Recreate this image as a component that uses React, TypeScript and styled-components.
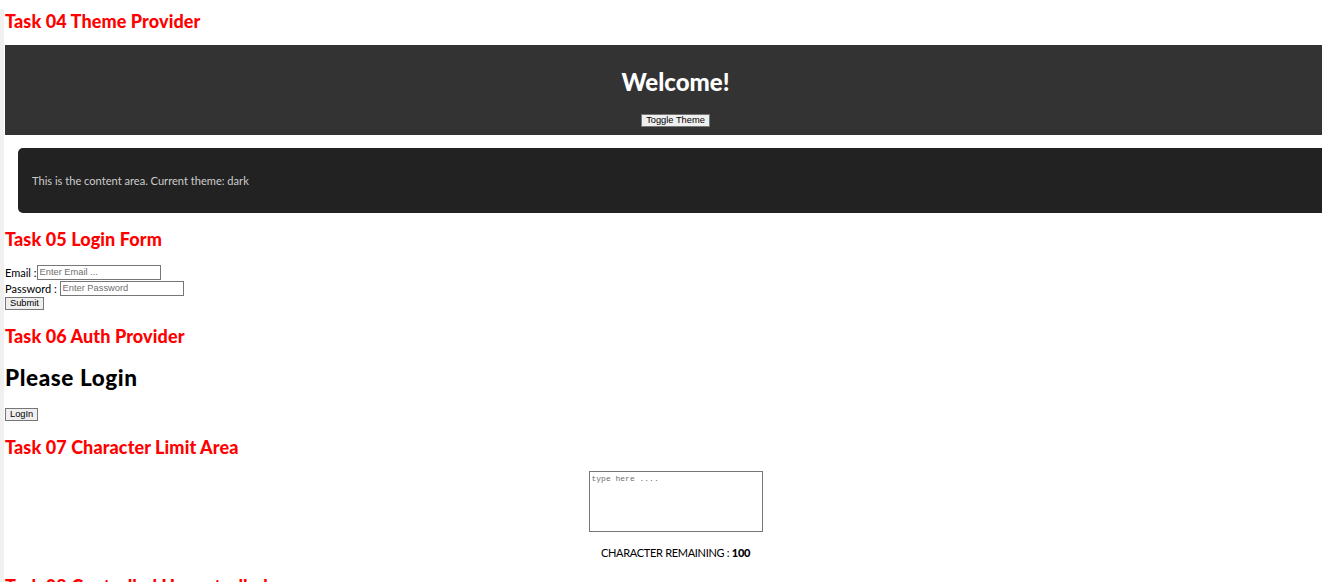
import React, { useState } from "react";
import styled, { createGlobalStyle } from "styled-components";

const Global = createGlobalStyle`
  html, body { margin: 0; padding: 0; overflow-x: hidden; scrollbar-width: none; }
  html::-webkit-scrollbar, body::-webkit-scrollbar { display: none; }
  body { font-family: Lato, "Open Sans", sans-serif; color: #000; background: #fff; }
`;

const Shell = styled.div`
  border-left: 4px solid #f0f0f0;
  padding-left: 1px;
  min-height: 100vh;
`;

const Page = styled.div`
  width: calc(100% + 24px);
`;

const TaskTitle = styled.h3<{ $top: number }>`
  margin: ${(p) => p.$top}px 0 0;
  font-family: Lato, sans-serif;
  font-weight: 900;
  font-size: 18px;
  line-height: 24px;
  letter-spacing: 0.1px;
  color: #ff0000;
`;

const Header = styled.header`
  margin-top: 12px;
  height: 90px;
  box-sizing: border-box;
  padding-top: 22px;
  background: #333333;
  text-align: center;
`;

const Welcome = styled.h1`
  margin: 0;
  font-family: Lato, sans-serif;
  font-weight: 900;
  font-size: 24px;
  line-height: 30px;
  color: #ffffff;
`;

const NativeButton = styled.button<{ $top?: number }>`
  margin-top: ${(p) => p.$top ?? 0}px;
  font-family: "Liberation Sans", Arial, sans-serif;
  font-size: 9.3px;
  line-height: 11px;
  padding: 0 4px;
  height: 13px;
  background: #efefef;
  color: #000;
  border: 1px solid #767676;
  border-radius: 0;
  box-sizing: border-box;
  display: inline-block;
`;

const Content = styled.div`
  margin: 13px 0 0 13px;
  height: 65px;
  box-sizing: border-box;
  padding: 24px 14px;
  border-radius: 5px;
  background: #222222;
  color: #cccccc;
  font-size: 11.1px;
  line-height: 17px;
`;

const Form = styled.form`
  margin-top: 13px;
  display: flex;
  flex-direction: column;
  align-items: flex-start;
`;

const Row = styled.label`
  display: flex;
  align-items: center;
  height: 16px;
  font-size: 11px;
  white-space: pre;
`;

const TextInput = styled.input`
  box-sizing: border-box;
  width: 124px;
  height: 15px;
  padding: 0 2px;
  border: 1px solid #767676;
  font-family: "Liberation Sans", Arial, sans-serif;
  font-size: 9.3px;
  &::placeholder { color: #6f6f6f; }
`;

const LoginTitle = styled.h2`
  margin: 17px 0 0;
  font-family: Lato, sans-serif;
  font-weight: 900;
  font-size: 22.5px;
  line-height: 26px;
  letter-spacing: 0.6px;
`;

const Center = styled.div`
  margin-top: 12px;
  display: flex;
  flex-direction: column;
  align-items: center;
`;

const Area = styled.textarea`
  box-sizing: border-box;
  width: 174px;
  height: 61px;
  margin: 0;
  padding: 2px;
  border: 1px solid #767676;
  resize: none;
  font-family: "Liberation Mono", monospace;
  font-size: 8px;
  &::placeholder { color: #6f6f6f; }
`;

const Remaining = styled.p`
  margin: 13px 0 0;
  font-size: 11px;
  line-height: 15px;
  letter-spacing: -0.3px;
  b { font-weight: 900; }
`;

export default function App() {
  const [text, setText] = useState("");
  return (
    <>
      <Global />
      <Shell>
        <Page>
          <TaskTitle $top={9}>Task 04 Theme Provider</TaskTitle>
          <Header>
            <Welcome>Welcome!</Welcome>
            <NativeButton $top={17}>Toggle Theme</NativeButton>
          </Header>
          <Content>This is the content area. Current theme: dark</Content>

          <TaskTitle $top={14}>Task 05 Login Form</TaskTitle>
          <Form onSubmit={(e) => e.preventDefault()}>
            <Row>
              Email :<TextInput type="email" placeholder="Enter Email ..." />
            </Row>
            <Row>
              Password : <TextInput type="password" placeholder="Enter Password" />
            </Row>
            <NativeButton $top={1} type="submit">Submit</NativeButton>
          </Form>

          <TaskTitle $top={14}>Task 06 Auth Provider</TaskTitle>
          <LoginTitle>Please Login</LoginTitle>
          <NativeButton $top={17}>LogIn</NativeButton>

          <TaskTitle $top={14}>Task 07 Character Limit Area</TaskTitle>
          <Center>
            <Area
              placeholder="type here ...."
              value={text}
              maxLength={100}
              onChange={(e) => setText(e.target.value)}
            />
            <Remaining>
              CHARACTER REMAINING : <b>{100 - text.length}</b>
            </Remaining>
          </Center>

          <TaskTitle $top={14}>Task 08 Controlled Uncontrolled</TaskTitle>
        </Page>
      </Shell>
    </>
  );
}
